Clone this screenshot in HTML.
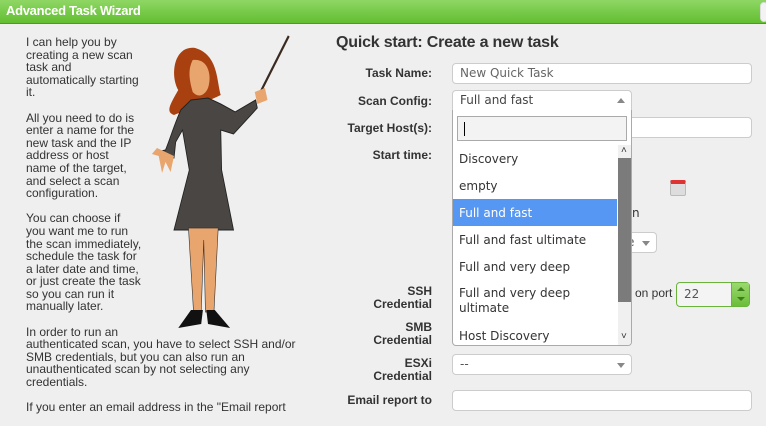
<!DOCTYPE html>
<html><head><style>
*{margin:0;padding:0;box-sizing:border-box}
body{width:766px;height:418px;overflow:hidden;background:#efefef;font-family:"Liberation Sans",sans-serif;position:relative;color:#333}
.hdr{position:absolute;left:0;top:0;width:766px;height:24px;background:linear-gradient(#8fd765,#62be30);border-bottom:1px solid #4d9a22;color:#fff;font-weight:bold;font-size:13px;padding:3px 6px;letter-spacing:-0.3px}
.left{position:absolute;left:26px;top:36px;font-size:12px;line-height:12.6px;color:#333;white-space:nowrap}
.left p{margin-bottom:12.6px}
.ab{position:absolute}
h1{position:absolute;left:336px;top:34px;font-size:16px;font-weight:bold;color:#333;letter-spacing:-0.2px}
.lbl{position:absolute;right:334px;font-size:12px;font-weight:bold;text-align:right;line-height:13px;color:#333}
.inp{position:absolute;background:#fff;border:1px solid #ccc;border-radius:4px;font-size:12px;color:#555;padding:2px 7px;font-family:"DejaVu Sans",sans-serif}
.tri{position:absolute;right:6px;top:8px;width:0;height:0;border-left:4px solid transparent;border-right:4px solid transparent;border-top:5px solid #888}
.item{position:absolute;left:0;width:164px;height:27px;font-family:"DejaVu Sans",sans-serif;font-size:12px;color:#333;padding:7px 6px}
</style></head><body>
<div class="hdr">Advanced Task Wizard</div>
<div class="ab" style="left:760px;top:2px;width:8px;height:20px;border:1px solid #ddd;border-radius:4px;background:#f3f3f3"></div>
<div class="left">
<p>I can help you by<br>creating a new scan<br>task and<br>automatically starting<br>it.</p>
<p>All you need to do is<br>enter a name for the<br>new task and the IP<br>address or host<br>name of the target,<br>and select a scan<br>configuration.</p>
<p>You can choose if<br>you want me to run<br>the scan immediately,<br>schedule the task for<br>a later date and time,<br>or just create the task<br>so you can run it<br>manually later.</p>
<p>In order to run an<br>authenticated scan, you have to select SSH and/or<br>SMB credentials, but you can also run an<br>unauthenticated scan by not selecting any<br>credentials.</p>
<p>If you enter an email address in the "Email report</p>
</div>
<svg class="ab" style="left:140px;top:30px" width="170" height="310" viewBox="0 0 200 310" preserveAspectRatio="none">
<line x1="175" y1="6" x2="140" y2="65" stroke="#3a2a20" stroke-width="2.5"/>
<path d="M65 18 C40 15 35 45 45 60 C35 75 30 82 40 85 C55 80 70 75 95 65 C90 50 92 25 65 18Z" fill="#a8410f"/>
<path d="M62 30 C80 28 85 45 80 58 C76 66 68 68 62 62 C58 50 56 40 62 30Z" fill="#e8a56e"/>
<path d="M60 70 L48 80 C40 95 35 110 30 120 L20 122 L40 128 L42 112 L50 100 L58 140 L40 200 L110 200 L96 140 L95 100 L110 104 L138 78 L136 70 L112 82 L95 74 L80 68 Z" fill="#4a4643" stroke="#222" stroke-width="1"/>
<path d="M20 118 L14 124 L22 126 L26 143 L30 132 L36 142 L40 126 Z" fill="#e8a56e"/>
<path d="M135 62 L147 58 L150 70 L138 74 Z" fill="#e8a56e"/>
<path d="M57 198 L63 282 L72 282 L75 210 L77 282 L87 282 L92 198 Z" fill="#e8a56e" stroke="#333" stroke-width="0.7"/>
<path d="M60 280 L45 298 L72 294 L74 280Z M78 280 L80 294 L106 298 L88 280Z" fill="#111"/>
</svg>
<h1>Quick start: Create a new task</h1>
<div class="lbl" style="top:67px">Task Name:</div>
<div class="lbl" style="top:95px">Scan Config:</div>
<div class="lbl" style="top:122px">Target Host(s):</div>
<div class="lbl" style="top:149px">Start time:</div>
<div class="lbl" style="top:285px">SSH<br>Credential</div>
<div class="lbl" style="top:321px">SMB<br>Credential</div>
<div class="lbl" style="top:357px">ESXi<br>Credential</div>
<div class="lbl" style="top:394px">Email report to</div>
<div class="inp" style="left:452px;top:63px;width:300px;height:21px;color:#666">New Quick Task</div>
<div class="inp" style="left:452px;top:117px;width:300px;height:21px"></div>
<div class="ab" style="left:670px;top:180px;width:16px;height:16px;background:#ddd;border:1px solid #bbb;border-top:4px solid #d33;border-radius:2px"></div>
<div class="ab" style="left:632px;top:206px;font-size:12px;font-family:'DejaVu Sans',sans-serif">n</div>
<div class="inp" style="left:600px;top:232px;width:57px;height:21px;padding-left:26px">e<div class="tri"></div></div>
<div class="ab" style="left:635px;top:286px;font-size:12px">on port</div>
<div class="inp" style="left:676px;top:282px;width:74px;height:25px;border-color:#6ab43e;background:#f4f4f4;padding-top:4px">22</div>
<div class="ab" style="left:731px;top:283px;width:18px;height:23px;background:linear-gradient(#9ad96f,#6cbd3a);border-left:1px solid #6ab43e">
<div class="ab" style="left:5px;top:4px;border-left:4px solid transparent;border-right:4px solid transparent;border-bottom:4px solid #3d7d1a"></div>
<div class="ab" style="left:5px;top:14px;border-left:4px solid transparent;border-right:4px solid transparent;border-top:4px solid #3d7d1a"></div>
</div>
<div class="inp" style="left:452px;top:354px;width:180px;height:21px">--<div class="tri"></div></div>
<div class="inp" style="left:452px;top:390px;width:300px;height:21px"></div>
<div class="inp" style="left:452px;top:90px;width:180px;height:21px;border-radius:4px 4px 0 0;color:#444">Full and fast<div class="tri" style="border-top:none;border-bottom:5px solid #888;top:7px"></div></div>
<div class="ab" style="left:452px;top:110px;width:180px;height:236px;background:#fff;border:1px solid #aaa;border-top:none;border-radius:0 0 4px 4px;overflow:hidden">
<div class="ab" style="left:4px;top:6px;width:170px;height:25px;border:1px solid #aaa;background:#f3f3f3"><div style="position:absolute;left:6px;top:5px;width:1px;height:14px;background:#000"></div></div>
<div class="ab" style="left:0;top:35px;width:180px;height:200px">
<div class="item" style="top:0">Discovery</div>
<div class="item" style="top:27px">empty</div>
<div class="item" style="top:54px;background:#5597f3;color:#fff">Full and fast</div>
<div class="item" style="top:81px">Full and fast ultimate</div>
<div class="item" style="top:108px">Full and very deep</div>
<div class="item" style="top:135px;line-height:15px;padding-top:6px">Full and very deep<br>ultimate</div>
<div class="item" style="top:177px">Host Discovery</div>
<div class="ab" style="left:165px;top:0;width:14px;height:200px;background:#f0f0f0"></div>
<div class="ab" style="left:165px;top:13px;width:14px;height:144px;background:#7b7b7b"></div>
<div class="ab" style="left:168px;top:0;font-size:10px;color:#333">˄</div>
<div class="ab" style="left:168px;top:186px;font-size:10px;color:#333">˅</div>
</div></div>
</body></html>
